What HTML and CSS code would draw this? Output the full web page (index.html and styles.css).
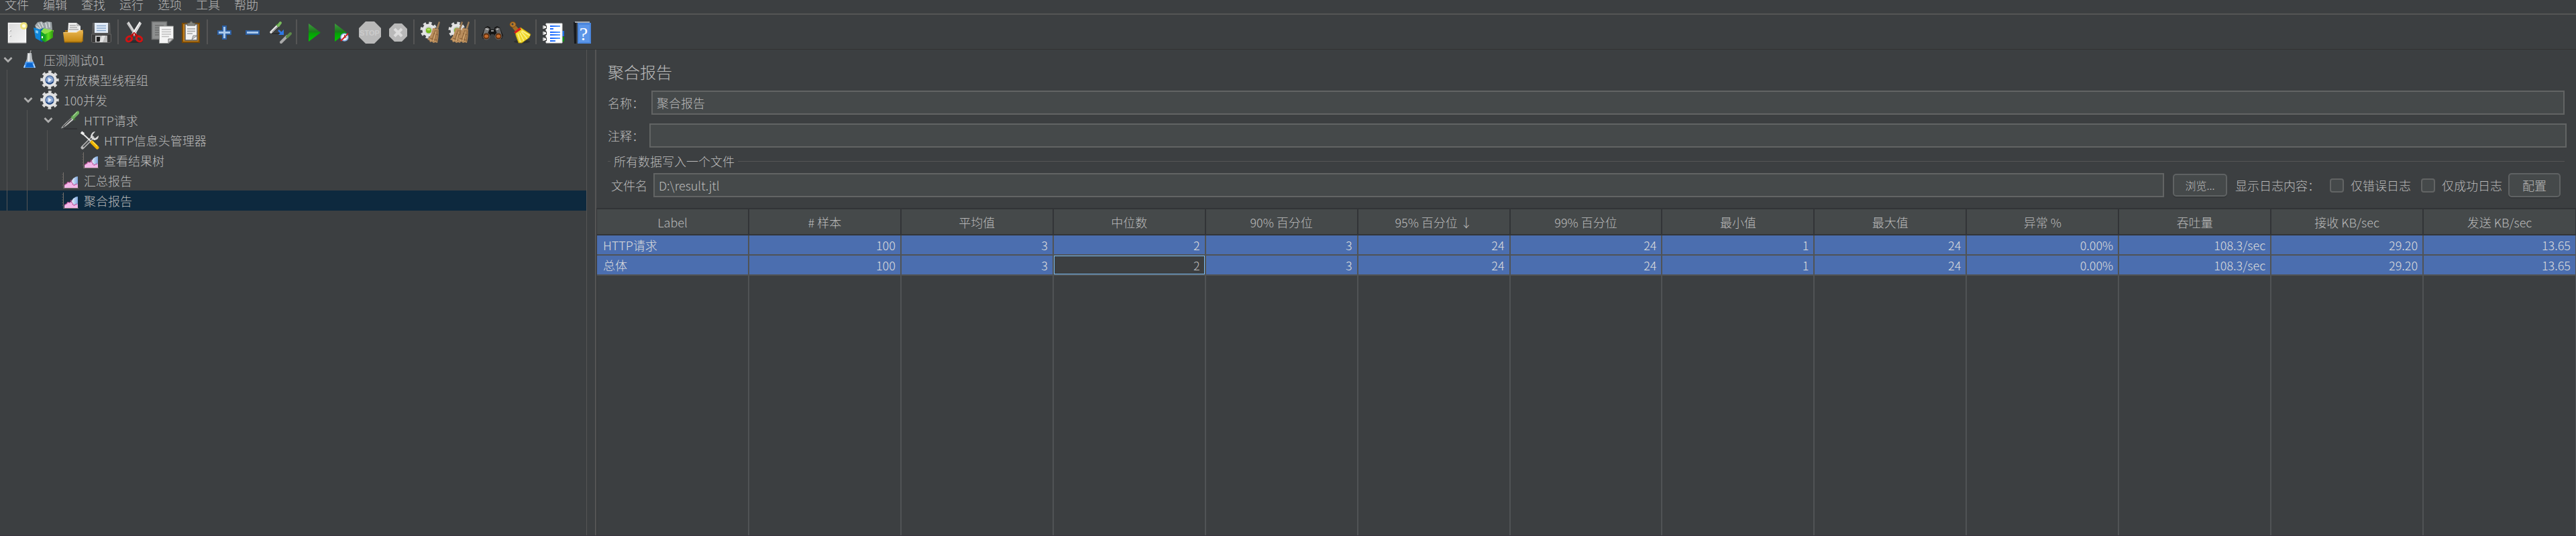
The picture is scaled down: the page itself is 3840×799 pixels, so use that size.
FILE: index.html
```html
<!DOCTYPE html>
<html lang="zh-CN">
<head>
    <meta charset="UTF-8">
    <meta name="viewport" content="width=device-width, initial-scale=1.0">
    <title>聚合报告</title>
    <link rel="stylesheet" href="styles.css">
</head>
<body>
    <!-- Shared icons and gradients -->
    <svg class="defs" width="0" height="0" aria-hidden="true">
        <defs>
            <linearGradient id="greenFill" x1="0" y1="0" x2="0" y2="1">
                <stop offset="0" stop-color="#3f9c3f"/><stop offset="0.45" stop-color="#1c7a1c"/><stop offset="0.55" stop-color="#06a006"/><stop offset="1" stop-color="#00c800"/>
            </linearGradient>
            <linearGradient id="boxGreen" x1="0" y1="0" x2="1" y2="0">
                <stop offset="0" stop-color="#1da01d"/><stop offset="0.4" stop-color="#5fdc1c"/><stop offset="1" stop-color="#2f9a10"/>
            </linearGradient>
            <linearGradient id="folderFill" x1="0" y1="0" x2="0" y2="1">
                <stop offset="0" stop-color="#e9b653"/><stop offset="1" stop-color="#c4860f"/>
            </linearGradient>
            <linearGradient id="pageFill" x1="0" y1="0" x2="1" y2="1">
                <stop offset="0" stop-color="#dcdcdc"/><stop offset="1" stop-color="#f4f4f4"/>
            </linearGradient>
            <linearGradient id="diskFill" x1="0" y1="0" x2="0" y2="1">
                <stop offset="0" stop-color="#6a6a6a"/><stop offset="1" stop-color="#3a3a3a"/>
            </linearGradient>
            <linearGradient id="blueBar" x1="0" y1="0" x2="1" y2="0">
                <stop offset="0" stop-color="#0a5cff"/><stop offset="1" stop-color="#5ea0ff"/>
            </linearGradient>
            <linearGradient id="skyFill" x1="0" y1="0" x2="1" y2="0">
                <stop offset="0" stop-color="#f2f8ff"/><stop offset="1" stop-color="#7fa9e0"/>
            </linearGradient>
            <symbol id="gear" viewBox="0 0 28 28">
                <circle cx="14" cy="14" r="11.5" fill="none" stroke="#d9d9d9" stroke-width="4.5" stroke-dasharray="4.5 4.53" stroke-dashoffset="2.25"/>
                <circle cx="14" cy="14" r="8.4" fill="none" stroke="#e2e2e2" stroke-width="4.6"/>
                <circle cx="14" cy="14" r="6" fill="#8ba7d2" stroke="#4f6b9a" stroke-width="1.5"/>
                <path d="M9 17a6 6 0 0 0 10 0" fill="none" stroke="#23477f" stroke-width="2"/>
                <path d="M12 10.500l5 3.500-5 3.500z" fill="#eef3fa"/>
            </symbol>
            <symbol id="chart" viewBox="0 0 28 28">
                <path d="M4.500 2v23.500H27" fill="none" stroke="#77716c" stroke-width="1"/>
                <path d="M2.500 5h2M2.500 9h2M2.500 13h2M2.500 17h2M2.500 21h2" stroke="#66625e" stroke-width="1"/>
                <path d="M16 16l3-5 4-2.500 3-.5v17H16z" fill="url(#skyFill)"/>
                <path d="M6 25v-4.500l3-1.500 2-2.500 3 .5 2-1.500 2 3 2 3 3-1.500 2-1 1 2v4z" fill="#f3b6e8"/>
                <path d="M6 20.500l3-1.500 2-2.500 3 .5 2-3 1.500 4 2.500 3 3-1 2-2" fill="none" stroke="#b8448e" stroke-width="1.500" stroke-dasharray="2 1"/>
            </symbol>
            <symbol id="chevron" viewBox="0 0 14 10">
                <path d="M1.500 2l5.500 5.500L12.500 2" fill="none" stroke="#adadad" stroke-width="2.800"/>
            </symbol>
            <symbol id="gearBack" viewBox="0 0 34 34">
                <circle cx="14" cy="14" r="10.500" fill="none" stroke="#dcdcdc" stroke-width="4" stroke-dasharray="4.125 4.125"/>
                <circle cx="14" cy="14" r="9.500" fill="#e4e4e4"/>
                <circle cx="14" cy="14" r="5.500" fill="#c8ccc4"/>
                <circle cx="14" cy="14.500" r="4" fill="#75b81b"/>
                <ellipse cx="14" cy="13" rx="2.500" ry="1.500" fill="#b4e063"/>
            </symbol>
            <symbol id="brush" viewBox="0 0 20 34">
                <path d="M17 1l2 1-3 11-3-1z" fill="#9c7c56"/>
                <path d="M11 11l6 2c0 7-.5 14-2 20l-3-1-3 1-2-2-3 1-1-3-3-1c4-4 7-10 8-17z" fill="#b98d5c"/>
                <path d="M12 14l-5 14M14 14l-3 16M16 14l-2 17M4 26l11 3M9 19l7 2" stroke="#8b6238" stroke-width="1"/>
                <path d="M13 16l-4 14M4 28l2 2" stroke="#dcb27c" stroke-width="1"/>
            </symbol>
        </defs>
    </svg>

    <nav class="menubar">
        <button type="button">文件</button>
        <button type="button">编辑</button>
        <button type="button">查找</button>
        <button type="button">运行</button>
        <button type="button">选项</button>
        <button type="button">工具</button>
        <button type="button">帮助</button>
    </nav>

    <div class="toolbar">
        <div class="group">
            <button type="button" aria-label="新建">
                <svg viewBox="0 0 34 34"><rect x="3.500" y="3.500" width="26" height="29" fill="url(#pageFill)" stroke="#fff" stroke-width="1.500"/><path d="M3 33h27" stroke="#8d8d8d"/><path d="M6 13v2M6 21v2" stroke="#fff" stroke-width="2"/><path d="M7 14v2M7 22v2" stroke="#8a8a8a"/><circle cx="26.500" cy="7.500" r="5.500" fill="#efe06a" opacity=".85"/><circle cx="26.500" cy="7.500" r="2.600" fill="#fffde0"/></svg>
            </button>
            <button type="button" aria-label="模板">
                <svg viewBox="0 0 34 34"><path d="M1 7l4-5 6-1 3 2 5-2 7 1 1 11-10 4L3 12z" fill="#9ba3a6"/><path d="M6 4l4 7M10 2l4 9M17 3l2 8M22 2l1 8M3 8l5 4" stroke="#d9dddf" stroke-width="1.500"/><path d="M-1 10l10 3v17L2 26z" fill="#1186d8"/><path d="M9 13l6-3v9l-3 13-3-2z" fill="#0b5ea8"/><path d="M2 14l4 1v4l-4-1z" fill="#7cc8f5"/><path d="M10 16l4-5 7 2 8 1-1 4-12 3z" fill="#8fe04a"/><path d="M10 16l6 4v12l-6-4z" fill="#13a523"/><path d="M16 20l12-6v11l-12 7z" fill="url(#boxGreen)"/><path d="M12 23v3" stroke="#fff" stroke-width="2"/></svg>
            </button>
            <button type="button" aria-label="打开">
                <svg viewBox="0 0 34 34"><path d="M4 14h24l3-1v18H3z" fill="#9a6a12"/><path d="M9 3h12l6 5v11H8z" fill="#ececec"/><path d="M11 7h9M11 10h11M10 13h14" stroke="#8e8e8e"/><path d="M21 3v5h6z" fill="#bdbdbd"/><path d="M1 17h20l5-3h4l1 3-2 15H3z" fill="url(#folderFill)"/><path d="M2 17.500h19l5-3h4" fill="none" stroke="#f5cf83"/><path d="M3 32h26" stroke="#8f6108" stroke-width="1.500"/></svg>
            </button>
            <button type="button" aria-label="保存">
                <svg viewBox="0 0 34 34"><path d="M3 3h26l2 28-2 2H3l-2-2z" fill="url(#diskFill)"/><path d="M1.500 20h29v11l-1.500 1.500H3L1.500 31z" fill="#3b3b3b" stroke="#666"/><path d="M6 3h20v15H6z" fill="#e3ecf7"/><path d="M9 7.500h14M9 11h14M9 14.500h14" stroke="#8aa8cc" stroke-width="1.500"/><path d="M7 22h18v10H7z" fill="#bdbdbd"/><path d="M9 24h5v7H9z" fill="#1f1f1f"/><path d="M17 22h5l-4 10h-5z" fill="#e2e2e2"/></svg>
            </button>
        </div>
        <span class="separator"></span>
        <div class="group">
            <button type="button" aria-label="剪切">
                <svg viewBox="0 0 34 34"><ellipse cx="17" cy="31" rx="12" ry="2" fill="#2b2d2f"/><path d="M5 4l3-3 12 19-3 3z" fill="#d7d7d7"/><path d="M27 4l-3-3-12 19 4 3z" fill="#f0f0f0"/><path d="M6 3l10 17M26 3L15 21" stroke="#9b9b9b" stroke-width=".7"/><ellipse cx="8.500" cy="27" rx="4.500" ry="3.500" transform="rotate(-35 8.500 27)" fill="none" stroke="#d11313" stroke-width="3"/><ellipse cx="23.500" cy="27" rx="4.500" ry="3.500" transform="rotate(35 23.500 27)" fill="none" stroke="#d11313" stroke-width="3"/><path d="M11 23l5-4 5 4" fill="none" stroke="#b80c0c" stroke-width="3.500"/><circle cx="16" cy="20" r="1" fill="#eee"/></svg>
            </button>
            <button type="button" aria-label="复制">
                <svg viewBox="0 0 34 34"><path d="M.5 1.500h22v26H.5z" fill="#8d8f8f" stroke="#707272" stroke-width="1.500"/><path d="M5 7h13M5 10.500h13M5 14h6M5 17.500h6M5 21h6" stroke="#6d6f6f" stroke-width="1.500"/><path d="M11.500 8h21v19l-7 6.500h-14z" fill="#f4f4f4" stroke="#8f918f"/><path d="M15 13h14M15 16.500h14M15 20h14M15 23.500h11" stroke="#bdbdbd" stroke-width="1.500"/><path d="M25 33v-6h7z" fill="#cfcfcf" stroke="#777"/></svg>
            </button>
            <button type="button" aria-label="粘贴">
                <svg viewBox="0 0 34 34"><path d="M4 4h25v28H4z" fill="#c4801c" stroke="#7a4a05" stroke-width="2"/><path d="M8 5h18v24H8z" fill="#f1f1f1" stroke="#5d5d5d" stroke-width="1.500"/><path d="M11 12h12M11 15.500h12M11 19h8" stroke="#a3a3a3" stroke-width="1.500"/><path d="M18 28l2-6h6z" fill="#c8c8c8" stroke="#777" stroke-width=".8"/><path d="M11 7V4l4-1 1-2h2l1 2 4 1v3z" fill="#85867f" stroke="#5e5f5a"/></svg>
            </button>
        </div>
        <span class="separator"></span>
        <div class="group">
            <button type="button" aria-label="展开">
                <svg viewBox="0 0 34 34"><path d="M15 8h5v7h7v5h-7v7h-5v-7H8v-5h7z" fill="#a9c8ea" stroke="#2c5fa3" stroke-width="2"/></svg>
            </button>
            <button type="button" aria-label="折叠">
                <svg viewBox="0 0 34 34"><path d="M8 15h19v5H8z" fill="#a9c8ea" stroke="#2c5fa3" stroke-width="2"/></svg>
            </button>
            <button type="button" aria-label="切换">
                <svg viewBox="0 0 34 34"><path d="M4 19h14" stroke="#2c2e30" stroke-width="2"/><path d="M3 17L13 7" stroke="#e8e8e8" stroke-width="3.500" stroke-linecap="round"/><path d="M4 17l9-9" stroke="#7d7d7d"/><path d="M11 5l4 4" stroke="#3f7f2d" stroke-width="2"/><path d="M14 7l3-4" stroke="#79bb5c" stroke-width="4" stroke-linecap="round"/><path d="M14 14l5 5" stroke="#2e78e6" stroke-width="2.500"/><path d="M22 13v8h-8z" fill="#2e78e6"/><path d="M18 32l9-9" stroke="#a9a9a9" stroke-width="4" stroke-linecap="round"/><path d="M27 24l5-5" stroke="#5d8a4a" stroke-width="4" stroke-linecap="round"/></svg>
            </button>
        </div>
        <span class="separator"></span>
        <div class="group">
            <button type="button" aria-label="启动">
                <svg viewBox="0 0 34 34"><path d="M10 4l18 13.500L10 31z" fill="url(#greenFill)"/></svg>
            </button>
            <button type="button" aria-label="不停顿开始">
                <svg viewBox="0 0 34 34"><path d="M7 4l18 13.500L7 31z" fill="url(#greenFill)"/><circle cx="21.500" cy="24.500" r="5.500" fill="#f4f8ff" stroke="#7fa7dc" stroke-width="1.500"/><path d="M21.500 21v4h3" fill="none" stroke="#555"/><path d="M16 30l11-11" stroke="#d32020" stroke-width="2"/></svg>
            </button>
            <button type="button" aria-label="停止" disabled>
                <svg viewBox="0 0 34 34"><path d="M11 1h13l10 10v13L24 34H11L1 24V11z" fill="#b9b9b9"/><text class="stop-text" x="17" y="22" text-anchor="middle">STOP</text></svg>
            </button>
            <button type="button" aria-label="关闭" disabled>
                <svg viewBox="0 0 34 34"><path d="M12 4h11l8 8v11l-8 8H12l-8-8V12z" fill="#b9b9b9"/><path d="M12 12l11 11M23 12L12 23" stroke="#dcdcdc" stroke-width="4"/></svg>
            </button>
        </div>
        <span class="separator"></span>
        <div class="group">
            <button type="button" aria-label="清除">
                <svg viewBox="0 0 34 34"><use href="#gearBack" width="34" height="34"/><use href="#brush" x="12" width="20" height="34"/></svg>
            </button>
            <button type="button" aria-label="清除全部">
                <svg viewBox="0 0 34 34"><use href="#gearBack" width="34" height="34"/><use href="#brush" x="4" width="20" height="34"/><use href="#brush" x="14" width="20" height="34"/></svg>
            </button>
        </div>
        <span class="separator"></span>
        <div class="group">
            <button type="button" aria-label="查找">
                <svg viewBox="0 0 34 34"><path d="M2 22L7 10l4-2 4 2v3h6v-3l4-2 4 2 5 12-2 5h-7l-5-7h-4l-4 7H4z" fill="#151515"/><path d="M7 11l4-1 3 2-3 7-7 2z" fill="#777"/><path d="M29 11l-4-1-3 2 3 7 7 2z" fill="#666"/><path d="M8 12l4 1M27 12l-3 1M16 15h4" stroke="#c7c7c7" stroke-width="1.500"/><circle cx="9" cy="23" r="5" fill="#5d2d0c" stroke="#666"/><circle cx="27" cy="23" r="5" fill="#5d2d0c" stroke="#666"/><ellipse cx="9" cy="23" rx="3" ry="2.500" fill="#c1692c"/><ellipse cx="27" cy="23" rx="3" ry="2.500" fill="#c1692c"/></svg>
            </button>
            <button type="button" aria-label="重置查找">
                <svg viewBox="0 0 34 34"><ellipse cx="20" cy="31" rx="12" ry="2.500" fill="#2d2f31"/><path d="M4 8l4-4 8 9-5 4z" fill="#a66c22"/><ellipse cx="6.500" cy="5.500" rx="4.500" ry="4" fill="#b67a2b" stroke="#7b4b12"/><circle cx="6" cy="5" r="1.500" fill="#3c3f41"/><path d="M10 16l8-6 15 10-2 5-11 8h-5L11 22z" fill="#f0d82c" stroke="#a58a08"/><path d="M14 19l4 13M17 18l6 12M19 16l9 11M20 15l12 7" stroke="#fbf08c" stroke-width="1.500"/><path d="M8 17l9-7 2 3-9 6z" fill="#d81c1c"/></svg>
            </button>
        </div>
        <span class="separator"></span>
        <div class="group">
            <button type="button" aria-label="函数助手">
                <svg viewBox="0 0 34 34"><path d="M27 15h7v8h-7z" fill="#1f6fe0"/><path d="M27 24h7v7h-7z" fill="#0a8a12"/><path d="M7 4h24v29H7z" fill="#fff" stroke="#d7d7d7"/><path d="M2 7h6v5H2zM2 16h6v5H2zM2 25h6v5H2z" fill="#b9b9b9"/><path d="M5 7h3v5H5zM5 16h3v5H5zM5 25h3v5H5z" fill="#333"/><path d="M4 8h3v3H4zM4 17h3v3H4zM4 26h3v3H4z" fill="#f2f2f2"/><path d="M13 7h15v2H13zM13 11h5v2h-5zM13 16h15v2H13zM13 20h15v2H13zM13 25h15v2H13zM13 29h8v2h-8z" fill="url(#blueBar)"/></svg>
            </button>
            <button type="button" aria-label="帮助">
                <svg viewBox="0 0 34 34"><path d="M6 2h7v32H7z" fill="#181a1c"/><path d="M10 2h3v32h-3z" fill="#3a3f44"/><path d="M12 3h20v31H12z" fill="#4a86dc"/><path d="M14 6h16v26H14z" fill="#5c96e8"/><path d="M8 2h22" stroke="#c8d2da" stroke-width="1.500"/><text class="help-text" x="21" y="29" text-anchor="middle">?</text></svg>
            </button>
        </div>
    </div>

    <main class="workspace">
        <!-- Test plan tree -->
        <aside class="tree" role="tree">
            <div class="tree-row" role="treeitem">
                <span class="toggle"><svg><use href="#chevron"/></svg></span>
                <span class="node-icon"><svg viewBox="0 0 28 28"><path d="M15 4l1-4" stroke="#999" stroke-width="1.500"/><path d="M11 4h6l1 9 5 13H5l5-13z" fill="#b9bdc0"/><path d="M13 5v14" stroke="#eee" stroke-width="2"/><path d="M8 17h12l3 9H5z" fill="#4a96ea"/><path d="M10 19h8l2 6H8z" fill="#0b66cf"/><path d="M7 22l-1 4M20 20l2 6" stroke="#b9d8fa" stroke-width="1.500"/></svg></span>
                <span>压测测试01</span>
            </div>
            <div class="tree-row" role="treeitem">
                <i class="guide"></i>
                <span class="toggle"></span>
                <span class="node-icon"><svg><use href="#gear"/></svg></span>
                <span>开放模型线程组</span>
            </div>
            <div class="tree-row" role="treeitem">
                <i class="guide"></i>
                <span class="toggle"><svg><use href="#chevron"/></svg></span>
                <span class="node-icon"><svg><use href="#gear"/></svg></span>
                <span>100并发</span>
            </div>
            <div class="tree-row" role="treeitem">
                <i class="guide"></i><i class="guide"></i>
                <span class="toggle"><svg><use href="#chevron"/></svg></span>
                <span class="node-icon"><svg viewBox="0 0 28 28"><path d="M5 27h20" stroke="#2f3133" stroke-width="1.500"/><path d="M1 26l4-5L17 10l3 3L8 23l-6 3z" fill="#e3e3e3" stroke="#77797a"/><path d="M4 24L17 12" stroke="#444" stroke-width="1.500"/><path d="M16 8l6 6" stroke="#3c6b35" stroke-width="2.500"/><path d="M19 10l7-7" stroke="#6fae60" stroke-width="5" stroke-linecap="round"/><path d="M19 8l6-6" stroke="#a3d590" stroke-width="1.200"/></svg></span>
                <span>HTTP请求</span>
            </div>
            <div class="tree-row" role="treeitem">
                <i class="guide"></i><i class="guide"></i><i class="guide"></i>
                <span class="toggle"></span>
                <span class="node-icon"><svg viewBox="0 0 28 28"><path d="M3 25l15-15" stroke="#b9b9b9" stroke-width="5" stroke-linecap="round"/><path d="M4 24l13-13" stroke="#4a4c4d" stroke-width="2"/><path d="M22 1l-4 5v4l4 1 5-4c0 5-3 7-7 7l-5-4c0-5 3-9 7-9z" fill="#dcdcdc"/><path d="M2 3l14 13" stroke="#e9e9e9" stroke-width="2"/><path d="M1 2l4 3" stroke="#eee" stroke-width="4"/><path d="M17 17l8 8" stroke="#f0b400" stroke-width="5" stroke-linecap="round"/><path d="M18 16l7 7" stroke="#ffdf4a" stroke-width="1.500"/></svg></span>
                <span>HTTP信息头管理器</span>
            </div>
            <div class="tree-row" role="treeitem">
                <i class="guide"></i><i class="guide"></i><i class="guide"></i>
                <span class="toggle"></span>
                <span class="node-icon"><svg><use href="#chart"/></svg></span>
                <span>查看结果树</span>
            </div>
            <div class="tree-row" role="treeitem">
                <i class="guide"></i><i class="guide"></i>
                <span class="toggle"></span>
                <span class="node-icon"><svg><use href="#chart"/></svg></span>
                <span>汇总报告</span>
            </div>
            <div class="tree-row selected" role="treeitem" aria-selected="true">
                <i class="guide"></i><i class="guide"></i>
                <span class="toggle"></span>
                <span class="node-icon"><svg><use href="#chart"/></svg></span>
                <span>聚合报告</span>
            </div>
        </aside>

        <section class="panel">
            <div class="form">
                <h1>聚合报告</h1>
                <div class="field name-field">
                    <label for="name">名称：</label>
                    <input type="text" id="name" value="聚合报告">
                </div>
                <div class="field comment-field">
                    <label for="comment">注释：</label>
                    <input type="text" id="comment">
                </div>
                <fieldset>
                    <legend>所有数据写入一个文件</legend>
                    <div class="file-row">
                        <label for="filename">文件名</label>
                        <input type="text" id="filename" value="D:\result.jtl">
                        <button type="button" class="browse">浏览...</button>
                        <span class="log-label">显示日志内容：</span>
                        <label class="check"><input type="checkbox">仅错误日志</label>
                        <label class="check"><input type="checkbox">仅成功日志</label>
                        <button type="button" class="config">配置</button>
                    </div>
                </fieldset>
            </div>

            <div class="table-wrap">
                <table>
                    <thead>
                        <tr>
                            <th>Label</th>
                            <th># 样本</th>
                            <th>平均值</th>
                            <th>中位数</th>
                            <th>90% 百分位</th>
                            <th>95% 百分位 ↓</th>
                            <th>99% 百分位</th>
                            <th>最小值</th>
                            <th>最大值</th>
                            <th>异常 %</th>
                            <th>吞吐量</th>
                            <th>接收 KB/sec</th>
                            <th>发送 KB/sec</th>
                        </tr>
                    </thead>
                    <tbody>
                        <tr>
                            <td>HTTP请求</td><td>100</td><td>3</td><td>2</td><td>3</td><td>24</td><td>24</td><td>1</td><td>24</td><td>0.00%</td><td>108.3/sec</td><td>29.20</td><td>13.65</td>
                        </tr>
                        <tr>
                            <td>总体</td><td>100</td><td>3</td><td class="focused">2</td><td>3</td><td>24</td><td>24</td><td>1</td><td>24</td><td>0.00%</td><td>108.3/sec</td><td>29.20</td><td>13.65</td>
                        </tr>
                        <tr class="filler">
                            <td></td><td></td><td></td><td></td><td></td><td></td><td></td><td></td><td></td><td></td><td></td><td></td><td></td>
                        </tr>
                    </tbody>
                </table>
            </div>
        </section>
    </main>
</body>
</html>
```
FILE: styles.css
```css
/* Base Styles */
* {
    box-sizing: border-box;
}

body {
    font-family: "Noto Sans CJK SC", "Open Sans", sans-serif;
    font-size: 18px;
    font-weight: 300;
    line-height: 28px;
    color: #bbbbbb;
    background-color: #3c3f41;
    margin: 0;
    height: 100vh;
    display: flex;
    flex-direction: column;
    overflow: hidden;
}

button,
input {
    font: inherit;
    color: inherit;
}

.defs {
    position: absolute;
}

/* Menu bar, scrolled partly off the top edge */
.menubar {
    display: flex;
    align-items: flex-end;
    gap: 21px;
    height: 22px;
    flex-shrink: 0;
    padding: 0 7px;
    border-bottom: 2px solid #555555;
}

.menubar button {
    height: 28px;
    padding: 0;
    border: none;
    background: none;
}

/* Toolbar */
.toolbar {
    display: flex;
    flex-shrink: 0;
    height: 52px;
    padding: 7px 5px;
    border-bottom: 1px solid #323232;
}

.group {
    display: flex;
}

.group button {
    width: 42px;
    padding: 1px 4px;
    border: none;
    background: none;
}

.group svg {
    display: block;
    width: 34px;
    height: 34px;
    overflow: visible;
}

.separator {
    width: 2px;
    margin: 0 3px 0 2px;
    background-color: #555555;
}

.stop-text {
    font: bold 11px "Liberation Sans", sans-serif;
    fill: #cccccc;
}

.help-text {
    font: 28px "Liberation Serif", serif;
    fill: #ffffff;
}

/* Main area */
.workspace {
    display: flex;
    flex: 1;
    min-height: 0;
    border-bottom: 1px solid #3a3540;
}

.tree {
    width: 875px;
    flex-shrink: 0;
    border-right: 1px solid #555555;
}

.tree-row {
    display: flex;
    align-items: center;
    height: 30px;
}

.tree-row.selected {
    background-color: #0d293e;
}

.guide {
    width: 20px;
    height: 30px;
    margin-left: 10px;
    border-left: 1px solid #555555;
}

.toggle {
    width: 30px;
    padding-left: 5px;
}

.toggle svg {
    display: block;
    width: 14px;
    height: 10px;
}

.node-icon {
    width: 35px;
}

.node-icon svg {
    display: block;
    width: 28px;
    height: 28px;
}

/* Report panel */
.panel {
    display: flex;
    flex-direction: column;
    flex: 1;
    min-width: 0;
    margin-left: 12px;
    border-left: 2px solid #555555;
}

.form {
    padding: 17px 14px 16px 17px;
}

h1 {
    margin: 0 0 12px;
    font-size: 24px;
    font-weight: 300;
    line-height: 32px;
}

.field {
    display: flex;
    align-items: center;
    margin-bottom: 13px;
}

.name-field {
    padding-right: 3px;
}

.name-field label {
    width: 65px;
}

.comment-field label {
    width: 62px;
}

input[type="text"] {
    flex: 1;
    min-width: 0;
    height: 36px;
    padding: 0 6px;
    border: 2px solid #626464;
    background-color: #45494a;
}

fieldset {
    margin: -7px 3px 0 0;
    padding: 0 6px 0 5px;
    border: none;
    border-top: 1px solid #555555;
}

legend {
    margin-left: -1px;
    padding: 0 5px;
}

.file-row {
    display: flex;
    align-items: center;
    margin-top: 4px;
}

.file-row > label:first-child {
    width: 63px;
}

.browse,
.config {
    border: 2px solid #5f6263;
    border-radius: 5px;
    background-color: #45494a;
    box-shadow: 0 2px 0 #35383a;
}

.browse {
    width: 81px;
    height: 34px;
    margin: 0 12px 0 13px;
    padding: 0;
    font-size: 16px;
}

.config {
    width: 78px;
    height: 36px;
    padding: 0;
}

.log-label {
    width: 141px;
}

.check {
    display: flex;
    align-items: center;
    margin-right: 15px;
}

.check input {
    appearance: none;
    width: 21px;
    height: 21px;
    margin: 0 10px 0 0;
    border: 2px solid #626464;
    border-radius: 4px;
    background-color: #45494a;
}

.check:last-of-type {
    margin-right: 9px;
}

/* Results table */
.table-wrap {
    flex: 1;
    min-height: 0;
    border-left: 1px solid #323437;
}

table {
    width: 100%;
    height: 100%;
    table-layout: fixed;
    border-collapse: separate;
    border-spacing: 0;
}

th {
    height: 41px;
    padding: 0;
    font-weight: 300;
    background-color: #45494a;
    border: solid #323437;
    border-width: 2px 2px 2px 0;
}

td {
    height: 30px;
    padding: 0 7px;
    line-height: 26px;
    text-align: right;
    color: #dddddd;
    background-color: #4b6eaf;
    border: solid #505355;
    border-width: 0 2px 2px 0;
}

td:first-child {
    padding-left: 9px;
    text-align: left;
}

th:last-child,
td:last-child {
    border-right-width: 1px;
}

.focused {
    color: #bbbbbb;
    background-color: #3c3f41;
    box-shadow: inset 0 0 0 1px #79bcf5;
}

.filler td {
    height: auto;
    background: none;
    border-bottom: none;
}
```
